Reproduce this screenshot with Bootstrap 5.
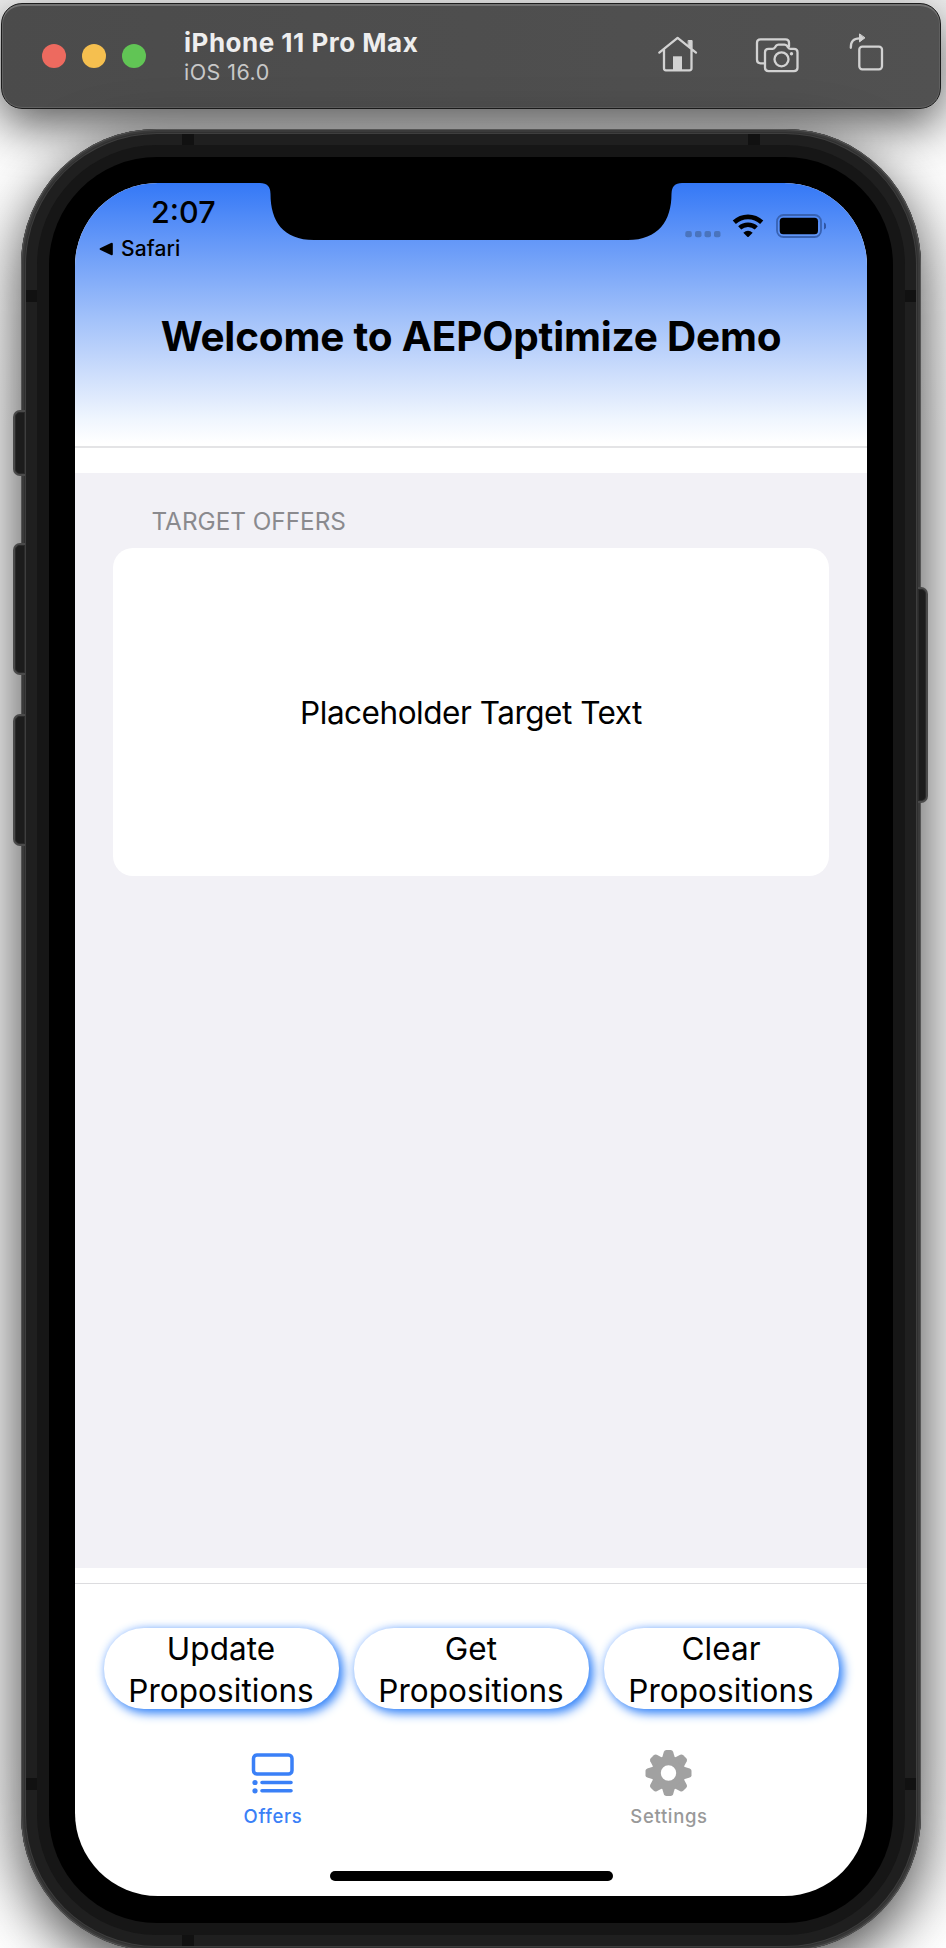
<!DOCTYPE html>
<html lang="en">
<head>
<meta charset="utf-8">
<title>iPhone 11 Pro Max</title>
<link rel="stylesheet" href="https://cdn.jsdelivr.net/npm/bootstrap@5.3.0/dist/css/bootstrap.min.css">
<style>
html,body{height:1948px;overflow:hidden}
body{width:946px;background:#fff;font-family:Inter,"Liberation Sans",sans-serif;color:#000}
.desk{width:946px;height:1948px;padding:3px 5px 0 1px;background:linear-gradient(#efefef,#fdfdfd 9%,#f4f4f4 22%,#f4f4f4 90%,#fff)}
.simbar{width:940px;height:106px;border:1px solid #1c1c1c;border-radius:21px;background:linear-gradient(90deg,#4b4b4b,#515151);box-shadow:inset 0 2px 0 #727272,inset 0 0 0 1px #606060,0 16px 46px rgba(0,0,0,.62);padding-left:40px}
.lights{gap:16px}
.light{width:24px;height:24px}
.light-close{background:#ed6a5f}
.light-min{background:#f5bf4f}
.light-max{background:#61c555}
.sim-title{margin-left:38px;padding-top:2px}
.sim-name{font-size:26px;line-height:30px;font-weight:700;letter-spacing:.5px;color:#eee;white-space:nowrap}
.sim-os{font-size:21.5px;line-height:29px;letter-spacing:.45px;color:#c8c8c8;white-space:nowrap}
.sim-tools{margin-right:40px}
.handset{width:900px;height:1822px;margin:20px 0 0 20px;padding:5px;border-radius:136px;background:#3e3e3e;box-shadow:inset 0 0 0 1px #555,inset 0 0 0 3px #3a3a3a,inset 0 0 0 4px #303030,0 18px 58px rgba(0,0,0,.72);position:relative}
.ring1{height:1812px;padding:11px;border-radius:131px;background:#1f1f1f}
.ring2{height:1790px;padding:12px;border-radius:120px;background:#161616}
.ring3{height:1766px;padding:26px 26px 27px;border-radius:108px;background:#000}
.phone-screen{width:792px;height:1713px;border-radius:83px;background:#fff;overflow:hidden;position:relative}
.hero{height:265px;background:linear-gradient(#3478f6 0,#6699f8 23%,#a3c2fa 52%,#d2e1fc 75%,#f0f6fe 90%,#fff 99%);border-bottom:2px solid #e4e4e6}
.notch{left:181px;top:-1px}
.status{height:90px;padding:10px 41px 0 24px}
.status-icons{margin-top:19px}
.clock{font-size:30.5px;line-height:38px;font-weight:550;padding-left:52px}
.backapp{font-size:21px;line-height:26px;font-weight:500;letter-spacing:.1px;margin-top:5px}
.backapp svg{margin-right:7px}
.hero h1{font-size:40.5px;line-height:48px;font-weight:700;letter-spacing:-.2px;white-space:nowrap;margin:40px 0 0;text-align:center}
.offers{margin-top:25px;height:1095px;background:#f2f1f6;padding:33px 38px 0}
.section-label{font-size:24.3px;line-height:30px;color:#8a8a8e;padding-left:38.500px;margin-bottom:12px}
.offer-card{height:328px;border-radius:20px;border:0;font-size:31.5px;letter-spacing:-.48px;padding-top:1px}
.actions{margin-top:15px;border-top:1px solid #dcdcdf;padding:44px 28.500px 0;gap:15px}
.pill{width:235px;height:81px;padding:0 0 2px;border:0;border-radius:40px;background:#fff;color:#000;font-size:31.5px;line-height:42px;font-weight:440;letter-spacing:.06px;box-shadow:4px 4px 11px 0 #2f80f8,0 0 8px rgba(52,130,255,.3)}
.pill:hover{background:#fff;color:#000}
.tabs{padding-top:40px}
.tab-item{width:50%;font-size:18.5px;line-height:24px;font-weight:500;letter-spacing:.65px}
.tab-item svg{margin-bottom:7px}
.tab-on{color:#3a80f7}
.tab-off{color:#999}
.homebar{width:283px;height:10px;border-radius:5px;background:#000;margin:43px auto 0}
.cut{background:#111;position:absolute}
.cut-x{width:12px;height:11px}
.cut-y{width:11px;height:12px}
.key{position:absolute;background:#1c1c1c;border:2px solid #4a4a4a;box-shadow:inset 0 0 0 1px #2a2a2a}
.key-l{left:-8px;width:12px;border-right:0;border-radius:7px 0 0 7px}
.key-r{right:-7px;width:10px;border-left:0;border-radius:0 7px 7px 0}
</style>
<script src="https://cdn.jsdelivr.net/npm/bootstrap@5.3.0/dist/js/bootstrap.bundle.min.js"></script>
</head>
<body>
<main class="desk">
  <header class="simbar d-flex align-items-center">
    <div class="lights d-flex">
      <span class="light light-close rounded-circle"></span>
      <span class="light light-min rounded-circle"></span>
      <span class="light light-max rounded-circle"></span>
    </div>
    <div class="sim-title flex-grow-1">
      <div class="sim-name"><span>iPhone 11 Pro Max</span></div>
      <div class="sim-os"><span>iOS 16.0</span></div>
    </div>
    <svg class="sim-tools" width="260" height="70" viewBox="640 20.7 260 70" fill="none" stroke="#d2d2d2" stroke-width="2.3" stroke-linejoin="round" stroke-linecap="round">
      <path d="M659.3 52.3 677.6 37.6 696 52.3M664 49.3V68q0 2 2 2h23.500q2 0 2-2V49.300"/>
      <path d="M688.5 40.200h3.600v8l-3.600-3z" fill="#d2d2d2" stroke-width="1"/>
      <path d="M673 56h9v14h-9z" fill="#d2d2d2" stroke="none"/>
      <path d="M764 63h-3.500q-3.500 0-3.500-3.500V42.500q0-3.500 3.500-3.500H785.500q3.500 0 3.500 3.500V46"/>
      <path d="M768.500 48.500h4q1.500 0 2.500-1.500l1-1.500q1-1.200 2.500-1.200h6q1.500 0 2.500 1.200l1 1.500q1 1.500 2.500 1.500h3.500q3.500 0 3.500 3.500V67.500q0 3.300-3.500 3.300H768.500q-3.500 0-3.500-3.300V52q0-3.500 3.500-3.500z"/>
      <circle cx="781.500" cy="59" r="7"/><circle cx="791.500" cy="53.500" r="1.700" fill="#d2d2d2" stroke="none"/>
      <rect x="859.300" y="46.300" width="22.700" height="22.700" rx="3"/>
      <path d="M850.800 47.500Q850.500 38 859.500 38"/><path d="M859.500 34v7.600l5.200-3.900z" fill="#d2d2d2" stroke-width="1"/>
    </svg>
  </header>
  <section class="handset">
    <div class="key key-l" style="top:281px;height:66px"></div>
    <div class="key key-l" style="top:414px;height:132px"></div>
    <div class="key key-l" style="top:585px;height:132px"></div>
    <div class="key key-r" style="top:458px;height:216px"></div>
    <div class="ring1">
      <div class="cut cut-x" style="left:161px;top:5px"></div>
      <div class="cut cut-x" style="left:727px;top:5px"></div>
      <div class="cut cut-y" style="left:5px;top:161px"></div>
      <div class="cut cut-y" style="right:5px;top:161px"></div>
      <div class="cut cut-y" style="left:5px;top:1649px"></div>
      <div class="cut cut-y" style="right:5px;top:1649px"></div>
      <div class="cut cut-x" style="left:161px;top:1806px"></div>
      <div class="ring2"><div class="ring3"><div class="phone-screen">
        <div class="hero">
          <svg class="notch position-absolute" width="430" height="60" viewBox="256 182 430 60"><path d="M256 182V183H260Q270.500 183 270.500 194C270.500 221 283 240 314 240H628C658 240 671.500 221 671.500 194Q671.500 183 682 183H686V182z"/></svg>
          <div class="status d-flex justify-content-between">
            <div>
              <div class="clock"><span>2:07</span></div>
              <div class="backapp d-flex align-items-center"><svg width="15" height="14" viewBox="0 0 15 14"><path d="M1 6.300Q0 7 1 7.700L12 13q1.800.700 1.800-1V2q0-1.700-1.800-1z"/></svg><span>Safari</span></div>
            </div>
            <svg class="status-icons" width="142" height="26" viewBox="684 212 142 26">
              <g fill="#4a74bd"><rect x="685.300" y="231" width="6.500" height="6.300" rx="2"/><rect x="695" y="231" width="6.500" height="6.300" rx="2"/><rect x="704.500" y="231" width="6.500" height="6.300" rx="2"/><rect x="714" y="231" width="6.500" height="6.300" rx="2"/></g>
              <g fill="none" stroke="#000" stroke-width="4.600"><path d="M734.300 222.300A20 20 0 0 1 761.700 222.300"/><path d="M739.700 227.900A12.500 12.500 0 0 1 756.300 227.900"/></g>
              <path d="M743.300 232.700Q748 228.900 752.700 232.700L748.700 236.800Q748 237.400 747.300 236.800z"/>
              <rect x="777" y="215" width="44" height="22" rx="6.500" fill="none" stroke="#3862b2" stroke-width="1.800"/>
              <rect x="779.700" y="217.800" width="38.300" height="16.400" rx="3.500"/><path d="M824 222.500q2.200.8 2.200 3.500t-2.200 3.500z" fill="#3056a5"/>
            </svg>
          </div>
          <h1><span>Welcome to AEPOptimize Demo</span></h1>
        </div>
        <div class="offers">
          <div class="section-label"><span>TARGET OFFERS</span></div>
          <div class="card offer-card d-flex align-items-center justify-content-center"><span>Placeholder Target Text</span></div>
        </div>
        <div class="actions d-flex">
          <button class="btn pill">Update<br>Propositions</button>
          <button class="btn pill">Get<br>Propositions</button>
          <button class="btn pill">Clear<br>Propositions</button>
        </div>
        <nav class="tabs d-flex text-center">
          <div class="tab-item tab-on d-flex flex-column align-items-center">
            <svg width="48" height="48" viewBox="248.500 1749 48 48" fill="none" stroke="#3a80f7"><rect x="253" y="1755" width="38.500" height="19" rx="3.500" stroke-width="3.500"/><path d="M261.500 1782.500h29M261.500 1790.800h29" stroke-width="3.600" stroke-linecap="round"/><g fill="#3a80f7" stroke="none"><circle cx="254.500" cy="1782.500" r="2.600"/><circle cx="254.500" cy="1790.800" r="2.600"/></g></svg>
            <span>Offers</span>
          </div>
          <div class="tab-item tab-off d-flex flex-column align-items-center">
            <svg width="48" height="48" viewBox="-23.500 -24 48 48" fill="#a1a1a1"><defs><path id="tooth" d="M-6.800-14L-4.600-21.200Q-4-23-2.200-23H2.200Q4-23 4.600-21.200L6.800-14z"/></defs><path fill-rule="evenodd" d="M0-17A17 17 0 1 0 0 17 17 17 0 1 0 0-17zM0-7.700A7.700 7.700 0 1 1 0 7.700 7.700 7.700 0 1 1 0-7.700z"/><use href="#tooth"/><use href="#tooth" transform="rotate(45)"/><use href="#tooth" transform="rotate(90)"/><use href="#tooth" transform="rotate(135)"/><use href="#tooth" transform="rotate(180)"/><use href="#tooth" transform="rotate(225)"/><use href="#tooth" transform="rotate(270)"/><use href="#tooth" transform="rotate(315)"/></svg>
            <span>Settings</span>
          </div>
        </nav>
        <div class="homebar"></div>
      </div></div></div>
    </div>
  </section>
</main>
</body>
</html>
